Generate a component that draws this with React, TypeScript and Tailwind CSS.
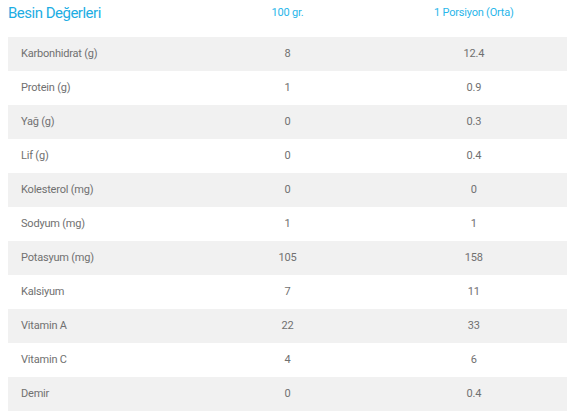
const ROWS: [string, string, string][] = [
  ["Karbonhidrat (g)", "8", "12.4"],
  ["Protein (g)", "1", "0.9"],
  ["Yağ (g)", "0", "0.3"],
  ["Lif (g)", "0", "0.4"],
  ["Kolesterol (mg)", "0", "0"],
  ["Sodyum (mg)", "1", "1"],
  ["Potasyum (mg)", "105", "158"],
  ["Kalsiyum", "7", "11"],
  ["Vitamin A", "22", "33"],
  ["Vitamin C", "4", "6"],
  ["Demir", "0", "0.4"],
];

export default function App() {
  return (
    <div className="w-[574px] h-[419px] bg-white pl-2 pr-[7px] font-['Roboto','Liberation_Sans',sans-serif]">
      {/* Header */}
      <div className="grid grid-cols-3 h-[37px] items-start">
        <div className="pt-[3px] text-[15px] leading-[20px] tracking-[-0.5px] text-[#1cade3]">
          Besin Değerleri
        </div>
        <div className="pt-[7px] text-center text-[11px] leading-[12px] tracking-[-0.2px] text-[#29b6ea]">
          100 gr.
        </div>
        <div className="pt-[7px] text-center text-[11px] leading-[12px] tracking-[-0.2px] text-[#29b6ea]">
          1 Porsiyon (Orta)
        </div>
      </div>

      {/* Rows */}
      {ROWS.map(([name, per100, portion], i) => (
        <div
          key={name}
          className={`grid grid-cols-3 h-[34px] items-center text-[11px] tracking-[-0.2px] text-[#707070] ${
            i % 2 === 0 ? "bg-[#f1f1f1]" : "bg-white"
          }`}
        >
          <div className="pl-[13px]">{name}</div>
          <div className="text-center">{per100}</div>
          <div className="text-center">{portion}</div>
        </div>
      ))}
    </div>
  );
}
